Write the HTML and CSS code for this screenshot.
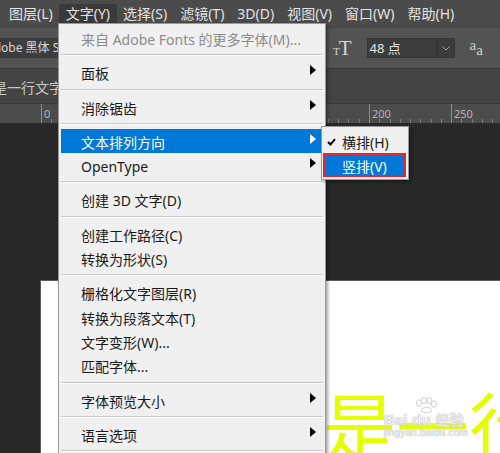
FILE: index.html
```html
<!DOCTYPE html>
<html lang="zh-CN">
<head>
<meta charset="utf-8">
<title>Photoshop 文字菜单</title>
<link rel="stylesheet" href="styles.css">
</head>
<body>
<div class="app">
  <div class="menubar">
    <span class="mb-item">图层(L)</span>
    <span class="mb-item active">文字(Y)</span>
    <span class="mb-item">选择(S)</span>
    <span class="mb-item">滤镜(T)</span>
    <span class="mb-item">3D(D)</span>
    <span class="mb-item">视图(V)</span>
    <span class="mb-item">窗口(W)</span>
    <span class="mb-item">帮助(H)</span>
  </div>

  <div class="options">
    <div class="fontbox">Adobe 黑体 Std R</div>
    <div class="tt"><span class="t-sm">T</span><span class="t-lg">T</span></div>
    <div class="sizebox">
      <span class="size-val">48 点</span>
      <span class="size-drop">
        <svg width="8" height="5" viewBox="0 0 8 5"><polyline points="0.5,0.5 4,4 7.5,0.5" fill="none" stroke="#a8a8a8" stroke-width="1"/></svg>
      </span>
    </div>
    <div class="aa"><span class="a1">a</span><span class="a2">a</span></div>
    <div class="nextbox"></div>
  </div>

  <div class="tabbar">
    <div class="tab">是一行文字.psd @ 66.7%</div>
  </div>

  <div class="ruler">
    <div class="r-seg">0</div>
    <div class="r-seg">50</div>
    <div class="r-seg">100</div>
    <div class="r-seg">150</div>
    <div class="r-seg">200</div>
    <div class="r-seg">250</div>
  </div>

  <div class="canvas">
    <div class="doc">
      <div class="bigtext">是一行文字</div>
      <div class="watermark">
        <svg class="paw" width="26" height="16" viewBox="0 0 26 16">
          <g fill="rgba(255,255,255,0.75)" stroke="#cfcfcf" stroke-width="1">
            <ellipse cx="6" cy="6" rx="2.6" ry="3.2"/>
            <ellipse cx="11" cy="3.5" rx="2.6" ry="3"/>
            <ellipse cx="16.5" cy="3.5" rx="2.6" ry="3"/>
            <ellipse cx="21" cy="7" rx="2.6" ry="3.2"/>
            <path d="M8 14 C9 9 17 9 19 14 C17 16 10 16 8 14 Z"/>
          </g>
        </svg>
        <div class="wm-line"><span class="wm-b">Bai</span><span class="wm-du">du</span><span class="wm-jy">经验</span></div>
        <div class="wm-url">jingyan.baidu.com</div>
      </div>
    </div>
  </div>

  <div class="dd">
    <div class="dd-item disabled">来自 Adobe Fonts 的更多字体(M)...</div>
    <div class="sep"></div>
    <div class="dd-item">面板<span class="arrow"></span></div>
    <div class="sep"></div>
    <div class="dd-item">消除锯齿<span class="arrow"></span></div>
    <div class="sep"></div>
    <div class="dd-item hl">文本排列方向<span class="arrow"></span></div>
    <div class="dd-item">OpenType<span class="arrow"></span></div>
    <div class="sep"></div>
    <div class="dd-item">创建 3D 文字(D)</div>
    <div class="sep"></div>
    <div class="dd-item">创建工作路径(C)</div>
    <div class="dd-item">转换为形状(S)</div>
    <div class="sep"></div>
    <div class="dd-item">栅格化文字图层(R)</div>
    <div class="dd-item">转换为段落文本(T)</div>
    <div class="dd-item">文字变形(W)...</div>
    <div class="dd-item">匹配字体...</div>
    <div class="sep"></div>
    <div class="dd-item">字体预览大小<span class="arrow"></span></div>
    <div class="sep"></div>
    <div class="dd-item">语言选项<span class="arrow"></span></div>
    <div class="sep"></div>
    <div class="dd-item">更新所有文字图层(U)</div>
  </div>

  <div class="sub">
    <div class="sub-item">
      <svg class="check" width="9" height="8" viewBox="0 0 9 8"><polyline points="1,4 3.5,6.5 8,1.2" fill="none" stroke="#000" stroke-width="2"/></svg>横排(H)
    </div>
    <div class="sub-item sel">竖排(V)</div>
  </div>
</div>
</body>
</html>
```

FILE: styles.css
```css
* {
  box-sizing: border-box;
  margin: 0;
  padding: 0;
}

html,
body {
  width: 500px;
  height: 453px;
  overflow: hidden;
  background: #282828;
}

body {
  font-family: "Noto Sans", "Noto Sans CJK SC", sans-serif;
}

.app {
  position: relative;
  width: 500px;
  height: 453px;
  overflow: hidden;
}

/* ---------- menu bar ---------- */
.menubar {
  height: 27px;
  background: #4b4b4b;
  display: flex;
  align-items: flex-start;
  padding-left: 2.5px;
}

.mb-item {
  margin-top: 4px;
  height: 19px;
  line-height: 19px;
  padding: 0 6.5px;
  font-size: 14px;
  color: #e2e2e2;
  white-space: nowrap;
}

.mb-item.active {
  background: #3a3a3a;
}

/* ---------- options bar ---------- */
.options {
  height: 41px;
  background: #535353;
  border-top: 1px solid #474747;
  display: flex;
  align-items: center;
  white-space: nowrap;
}

.fontbox {
  flex: 0 0 200px;
  margin-left: -19px;
  height: 20px;
  background: #3e3e3e;
  border: 1px solid #383838;
  font-size: 12px;
  line-height: 18px;
  color: #d6d6d6;
  padding-left: 4px;
  overflow: hidden;
}

.tt {
  flex: 0 0 17px;
  margin-left: 152px;
  height: 20px;
  display: flex;
  align-items: flex-end;
  font-family: "Liberation Serif", serif;
  color: #d4d4d4;
  line-height: 1;
}

.t-sm {
  font-size: 11px;
  margin-right: -1px;
  margin-bottom: 1px;
}

.t-lg {
  font-size: 21px;
  margin-bottom: -1px;
}

.sizebox {
  flex: 0 0 88px;
  margin-left: 15px;
  height: 20px;
  background: #3c3c3c;
  border: 1px solid #363636;
  display: flex;
}

.size-val {
  flex: 1;
  font-size: 13px;
  line-height: 18px;
  color: #e2e2e2;
  padding-left: 2px;
}

.size-drop {
  flex: 0 0 17px;
  border-left: 1px solid #333;
  display: flex;
  align-items: center;
  justify-content: center;
  padding-top: 1px;
}

.aa {
  flex: 0 0 16px;
  margin-left: 15px;
  height: 22px;
  font-family: "Liberation Serif", serif;
  color: #cfcfcf;
  display: flex;
  align-items: flex-start;
  line-height: 1;
}

.a1 {
  font-size: 15px;
  margin-top: 1px;
}

.a2 {
  font-size: 15px;
  margin-top: 6px;
}

.nextbox {
  flex: 0 0 30px;
  margin-left: 14px;
  height: 22px;
  background: #3c3c3c;
  border: 1px solid #363636;
}

/* ---------- tab bar ---------- */
.tabbar {
  height: 35px;
  background: #444444;
  border-top: 1px solid #3a3a3a;
  overflow: hidden;
}

.tab {
  margin-left: -7px;
  padding-top: 9px;
  font-size: 14px;
  line-height: 20px;
  color: #c9c9c9;
  white-space: nowrap;
}

/* ---------- ruler ---------- */
.ruler {
  height: 20px;
  background: #4c4c4c;
  border-top: 1px solid #3a3a3a;
  display: flex;
  padding-left: 41px;
  overflow: hidden;
}

.r-seg {
  flex: 0 0 82px;
  border-left: 1px solid #8c8c8c;
  font-size: 11px;
  line-height: 16px;
  padding: 2px 0 0 2px;
  color: #b2b2b2;
  background: repeating-linear-gradient(to right, transparent 0 9.25px, #7e7e7e 9.25px 10.25px) left bottom / 100% 4px no-repeat;
}

/* ---------- canvas ---------- */
.canvas {
  height: 330px;
  background: #282828;
  padding: 157px 0 0 40px;
}

.doc {
  position: relative;
  height: 200px;
  background: #ffffff;
  border-left: 1px solid #5c5c5c;
  border-top: 1px solid #5c5c5c;
  padding: 105px 0 0 282px;
  overflow: hidden;
}

.bigtext {
  font-family: "Noto Sans CJK SC", sans-serif;
  font-size: 73px;
  line-height: 73px;
  color: #e6ff00;
  white-space: nowrap;
}

.watermark {
  position: absolute;
  left: 343px;
  top: 116px;
  width: 92px;
  color: rgba(255, 255, 255, 0.72);
  text-shadow: 0 0 1px #b8b8b8, 0 0 1px #b8b8b8;
  font-family: "Liberation Sans", "Noto Sans CJK SC", sans-serif;
}

.paw {
  display: block;
  margin-left: 29px;
}

.wm-line {
  font-size: 15px;
  line-height: 15px;
  font-weight: bold;
  white-space: nowrap;
  margin-top: -1px;
}

.wm-du {
  margin-left: 3px;
  padding: 0 2px;
}

.wm-jy {
  font-size: 14px;
  margin-left: 3px;
}

.wm-url {
  font-size: 10px;
  line-height: 10px;
  letter-spacing: 0.2px;
  white-space: nowrap;
}

/* ---------- dropdown ---------- */
.dd {
  position: absolute;
  left: 58px;
  top: 23px;
  width: 268px;
  height: 460px;
  background: #f0f0f0;
  border: 1px solid #999999;
  padding: 2px;
  box-shadow: 2px 2px 3px rgba(0, 0, 0, 0.35);
}

.dd-item {
  position: relative;
  height: 24.3px;
  line-height: 28px;
  padding-left: 20px;
  font-size: 14px;
  color: #1a1a1a;
  white-space: nowrap;
}

.dd-item.disabled {
  color: #8c8c8c;
}

.dd-item.hl {
  background: #0078d7;
  color: #ffffff;
}

.arrow {
  position: absolute;
  right: 7px;
  top: 5px;
  width: 0;
  height: 0;
  border-top: 5px solid transparent;
  border-bottom: 5px solid transparent;
  border-left: 6px solid #000;
}

.dd-item.hl .arrow {
  border-left-color: #ffffff;
}

.sep {
  margin: 4px 0;
  border-top: 1px solid #c9c9c9;
  border-bottom: 1px solid #fbfbfb;
}

/* ---------- submenu ---------- */
.sub {
  position: absolute;
  left: 321px;
  top: 126px;
  width: 88px;
  background: #f0f0f0;
  border: 1px solid #999999;
  padding: 2px 2px 2px 1px;
  box-shadow: 2px 2px 3px rgba(0, 0, 0, 0.35);
}

.sub-item {
  position: relative;
  height: 24px;
  line-height: 28px;
  padding-left: 19px;
  font-size: 14px;
  color: #1a1a1a;
  white-space: nowrap;
}

.sub-item.sel {
  background: #0078d7;
  color: #ffffff;
  outline: 2px solid #e3262f;
  outline-offset: -2px;
}

.check {
  position: absolute;
  left: 4px;
  top: 9px;
}
```
